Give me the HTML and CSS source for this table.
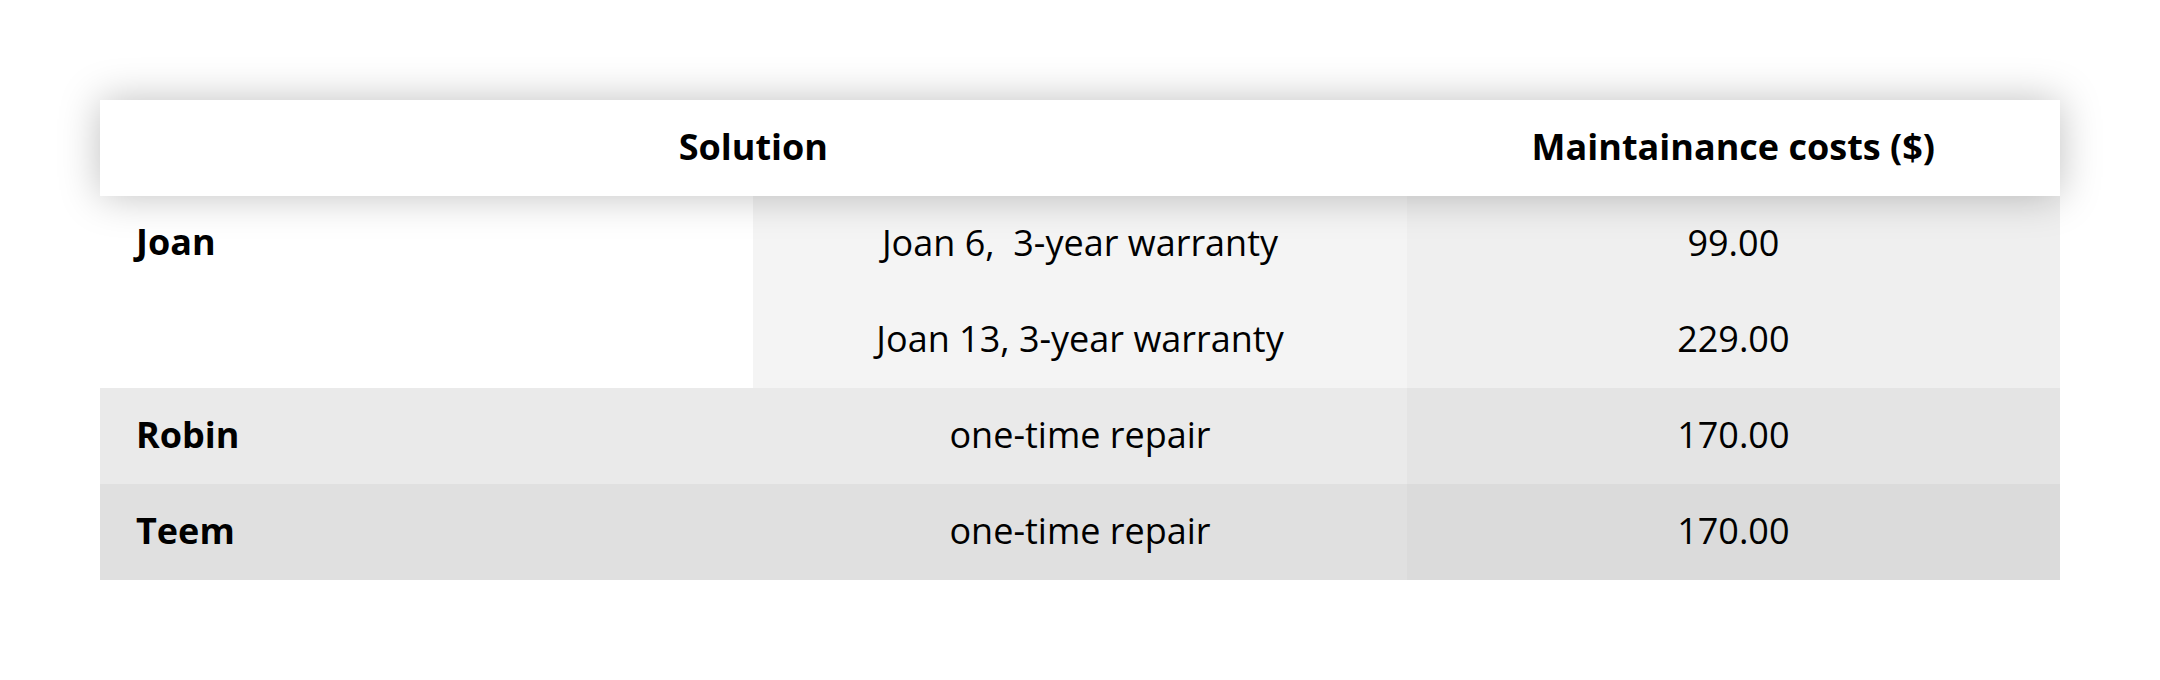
FILE: index.html
```html
<!DOCTYPE html>
<html lang="en">
<head>
<meta charset="utf-8">
<title>Maintenance costs</title>
<link rel="stylesheet" href="styles.css">
</head>
<body>
<div class="table">
  <div class="head">
    <div class="th th-solution">Solution</div>
    <div class="th">Maintainance costs ($)</div>
  </div>
  <div class="body">
    <div class="cell name joan-name">Joan</div>
    <div class="cell sol r1">Joan 6,&nbsp; 3-year warranty</div>
    <div class="cell cost r1c">99.00</div>
    <div class="cell sol r1">Joan 13, 3-year warranty</div>
    <div class="cell cost r1c">229.00</div>

    <div class="cell name r2">Robin</div>
    <div class="cell sol r2">one-time repair</div>
    <div class="cell cost r2c">170.00</div>

    <div class="cell name r3">Teem</div>
    <div class="cell sol r3">one-time repair</div>
    <div class="cell cost r3c">170.00</div>
  </div>
</div>
</body>
</html>
```

FILE: styles.css
```css
html, body {
  margin: 0;
  padding: 0;
  background: #ffffff;
}

body {
  font-family: "Open Sans", "Noto Sans", sans-serif;
  color: #000;
  font-size: 36px;
  padding: 100px 100px 0;
}

.table {
  display: flex;
  flex-direction: column;
}

.head {
  position: relative;
  z-index: 1;
  display: grid;
  grid-template-columns: 2fr 1fr;
  height: 96px;
  background: #ffffff;
  box-shadow: 0 0 40px rgba(0, 0, 0, 0.25);
}

.th {
  display: flex;
  align-items: center;
  justify-content: center;
  font-weight: 700;
  padding-bottom: 4px;
}

.body {
  display: grid;
  grid-template-columns: 1fr 1fr 1fr;
  grid-auto-rows: 96px;
}

.cell {
  display: flex;
  align-items: center;
  justify-content: center;
  padding-bottom: 4px;
}

.name {
  justify-content: flex-start;
  font-weight: 700;
  padding-left: 36px;
}

.joan-name {
  grid-row: span 2;
  align-items: flex-start;
  line-height: 92px;
  padding-bottom: 0;
  background: #ffffff;
}

.r1 { background: #f4f4f4; }
.r1c { background: #efefef; }
.r2 { background: #eaeaea; }
.r2c { background: #e4e4e4; }
.r3 { background: #e0e0e0; }
.r3c { background: #dbdbdb; }
```
